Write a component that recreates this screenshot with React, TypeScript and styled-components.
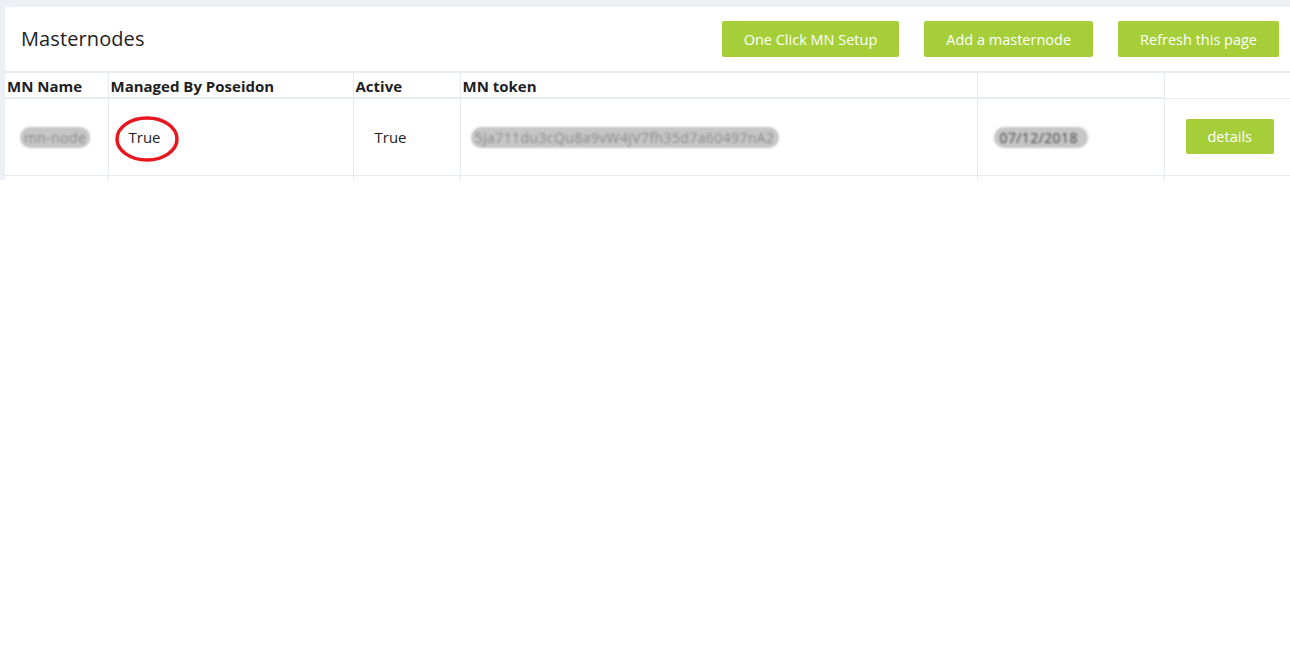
import styled, { createGlobalStyle } from "styled-components";

const GlobalStyle = createGlobalStyle`
  html, body {
    margin: 0;
    padding: 0;
    background: #ffffff;
    font-family: "Open Sans", "Liberation Sans", sans-serif;
    color: #222;
  }
`;

interface IRow {
    name: string,
    managed: string,
    active: string,
    token: string,
    date: string
}

const rows: IRow[] = [
    { name: "mn-node", managed: "True", active: "True", token: "5Ja711du3cQu8a9vW4jV7fh35d7a60497nA2", date: "07/12/2018" }
];

const App = () => {
    return <>
        <GlobalStyle />
        <PageBackground>
            <Card>
                <CardHeader>
                    <Title>Masternodes</Title>
                    <ButtonGroup>
                        <GreenButton>One Click MN Setup</GreenButton>
                        <GreenButton>Add a masternode</GreenButton>
                        <GreenButton>Refresh this page</GreenButton>
                    </ButtonGroup>
                </CardHeader>
                <Table>
                    <colgroup>
                        <col style={{ width: 103 }} />
                        <col style={{ width: 245 }} />
                        <col style={{ width: 107 }} />
                        <col style={{ width: 517 }} />
                        <col style={{ width: 187 }} />
                        <col />
                    </colgroup>
                    <thead>
                        <tr>
                            <HeadCell>MN Name</HeadCell>
                            <HeadCell>Managed By Poseidon</HeadCell>
                            <HeadCell>Active</HeadCell>
                            <HeadCell>MN token</HeadCell>
                            <HeadCell></HeadCell>
                            <HeadCell $last></HeadCell>
                        </tr>
                    </thead>
                    <tbody>
                        {rows.map((row, index) => (
                            <tr key={index}>
                                <Cell $padLeft={15}><Blurred>{row.name}</Blurred></Cell>
                                <Cell $padLeft={20}>
                                    <Circled>
                                        {row.managed}
                                        <RedRing viewBox="0 0 64 46" aria-hidden>
                                            <ellipse cx="32" cy="23" rx="30" ry="21" fill="none" stroke="#e8171f" strokeWidth="3.5" />
                                        </RedRing>
                                    </Circled>
                                </Cell>
                                <Cell $padLeft={21}>{row.active}</Cell>
                                <Cell $padLeft={10}><Blurred>{row.token}</Blurred></Cell>
                                <Cell $padLeft={16}><Blurred $dark $wide>{row.date}</Blurred></Cell>
                                <Cell $padLeft={21}><DetailsButton>details</DetailsButton></Cell>
                            </tr>
                        ))}
                        <tr>
                            <Cell></Cell><Cell></Cell><Cell></Cell><Cell></Cell><Cell></Cell><Cell></Cell>
                        </tr>
                    </tbody>
                </Table>
            </Card>
        </PageBackground>
    </>;
};

export default App;

const PageBackground = styled.div({
    background: '#ecf0f4',
    padding: '7px 0 0 5px',
    height: '180px',
    boxSizing: 'border-box',
    overflow: 'hidden'
});

const Card = styled.div({
    background: '#ffffff',
    height: '100%'
});

const CardHeader = styled.div({
    display: 'flex',
    alignItems: 'center',
    justifyContent: 'space-between',
    height: '64px',
    padding: '0 11px 0 16px',
    boxSizing: 'border-box'
});

const Title = styled.h2({
    margin: 0,
    marginTop: '-2px',
    fontSize: '20px',
    fontWeight: 400,
    color: '#222',
    letterSpacing: '0.1px'
});

const ButtonGroup = styled.div({
    display: 'flex',
    gap: '25px'
});

const GreenButton = styled.button({
    height: '36px',
    padding: '0 22px',
    background: '#a5ce39',
    color: '#ffffff',
    border: 'none',
    borderRadius: '2px',
    fontFamily: '"Open Sans", "Liberation Sans", sans-serif',
    fontSize: '14.5px',
    cursor: 'pointer'
});

const DetailsButton = styled(GreenButton)({
    padding: '0 22px',
    height: '35px'
});

const Table = styled.table({
    width: '100%',
    borderCollapse: 'collapse',
    tableLayout: 'fixed',
    borderTop: '2px solid #e8ecf1'
});

const HeadCell = styled.th<{ $last?: boolean }>(props => ({
    textAlign: 'left',
    fontSize: '15px',
    fontWeight: 700,
    color: '#1e1e1e',
    height: '26px',
    padding: '2px 2px 0 2px',
    boxSizing: 'border-box',
    borderRight: '1px solid #e6e9ed',
    borderBottom: props.$last ? '1px solid #e6e9ed' : '2px solid #e8ecf1',
    '&:last-child': {
        borderRight: 'none'
    }
}));

const Cell = styled.td<{ $padLeft?: number }>(props => ({
    height: '76px',
    padding: `0 4px 0 ${props.$padLeft ?? 4}px`,
    fontSize: '15px',
    color: '#222',
    borderRight: '1px solid #e6e9ed',
    borderBottom: '1px solid #e6e9ed',
    verticalAlign: 'middle',
    whiteSpace: 'nowrap',
    overflow: 'hidden',
    '&:last-child': {
        borderRight: 'none'
    }
}));

const Blurred = styled.span<{ $dark?: boolean, $wide?: boolean }>(props => ({
    display: 'inline-block',
    padding: props.$wide ? '1px 10px 1px 6px' : '1px 4px',
    background: '#c6c6c6',
    borderRadius: '10px',
    color: props.$dark ? '#444' : '#8a8a8a',
    filter: 'blur(1.1px)',
    fontSize: '14px',
    letterSpacing: '0.4px'
}));

const Circled = styled.span({
    position: 'relative',
    display: 'inline-block'
});

const RedRing = styled.svg({
    position: 'absolute',
    left: '-14px',
    top: '-11px',
    width: '64px',
    height: '46px',
    overflow: 'visible'
});
